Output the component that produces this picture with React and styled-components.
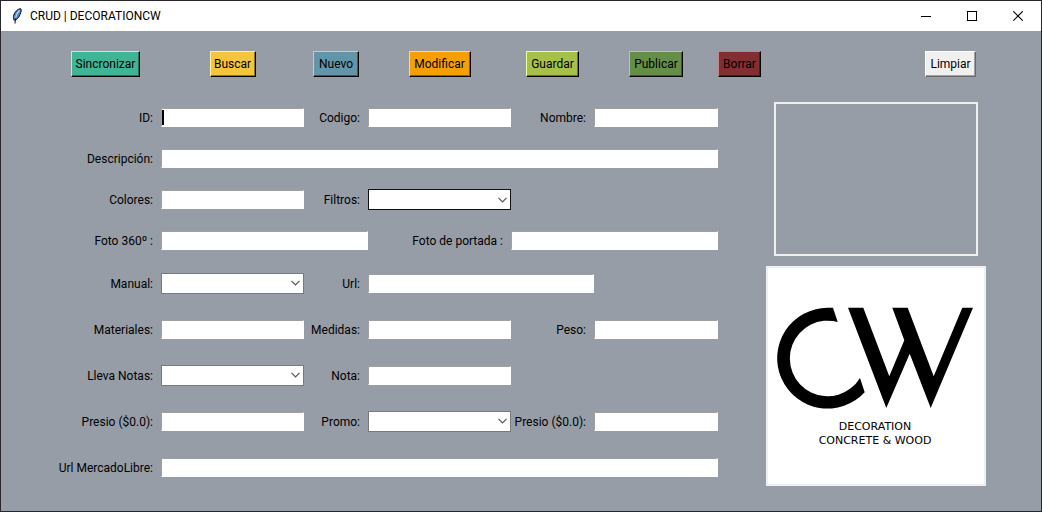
import React from 'react';
import styled, { createGlobalStyle } from 'styled-components';

const GlobalStyle = createGlobalStyle`
  * { box-sizing: border-box; }
  body {
    margin: 0;
    background: #969da7;
    font-family: Roboto, 'Open Sans', sans-serif;
    font-size: 12px;
    line-height: 16px;
    color: #000;
  }
  button, input, select { font: inherit; color: inherit; }
`;

const columns = [111, 143, 64, 143, 83, 124, 43, 230]
  .map((n) => `minmax(0, ${n}fr)`)
  .join(' ');

const Window = styled.div`
  display: flex;
  flex-direction: column;
  min-height: 100vh;
  background: #969da7;
  border: 1px solid #29262b;
`;

const TitleBar = styled.header`
  display: flex;
  align-items: center;
  height: 30px;
  padding-left: 8px;
  background: #fff;
`;

const Title = styled.h1`
  flex: 1;
  margin: 0 0 0 5px;
  font-size: 12px;
  font-weight: 400;
  white-space: nowrap;
`;

const WindowButton = styled.button`
  display: flex;
  align-items: center;
  justify-content: center;
  width: 46px;
  height: 30px;
  padding: 0;
  border: 0;
  background: transparent;
`;

const Content = styled.main`
  display: grid;
  grid-template-columns: ${columns};
  grid-template-rows: 66px auto;
  padding: 0 50px 0 49px;
`;

const Toolbar = styled.div`
  grid-column: 1 / -1;
  display: grid;
  grid-template-columns: subgrid;
  align-items: center;
  justify-items: center;
`;

const ToolButton = styled.button`
  width: ${(p) => p.$width}px;
  height: 26px;
  padding: 0;
  white-space: nowrap;
  background: ${(p) => p.$face};
  border: 1px solid;
  border-color: ${(p) => `${p.$light} ${p.$edge || '#000'} ${p.$edge || '#000'} ${p.$light}`};
  box-shadow: inset -1px -1px 0 ${(p) => p.$shade};
  ${(p) => p.$end && 'justify-self: end; margin-right: 15px;'}
`;

const Form = styled.form`
  grid-column: 1 / 7;
  display: grid;
  grid-template-columns: subgrid;
  grid-template-rows: repeat(3, 41px) 40px repeat(5, 46px);
  align-items: center;
`;

const Label = styled.label`
  grid-column: ${(p) => p.$col};
  grid-row: ${(p) => p.$row};
  padding: 1px 8px 0 0;
  text-align: right;
  white-space: nowrap;
  justify-self: end;
`;

const Cell = styled.div`
  grid-column: ${(p) => p.$col} / span ${(p) => p.$span};
  grid-row: ${(p) => p.$row};
  position: relative;
  display: flex;
  align-items: center;
`;

const Entry = styled.input`
  width: 100%;
  height: 19px;
  padding: 0 2px;
  background: #fff;
  border: 1px solid;
  border-color: #a0a0a0 #fff #fff #a0a0a0;
  border-radius: 0;
  outline: 0;
`;

const Combo = styled.select`
  width: 100%;
  height: 21px;
  padding: 0 20px 0 3px;
  appearance: none;
  background: #fff;
  border: 1px solid ${(p) => (p.$active ? '#101010' : '#7a7a7a')};
  border-radius: 0;
  outline: 0;
`;

const Chevron = styled.svg`
  position: absolute;
  right: 4px;
  pointer-events: none;
`;

const Caret = styled.span`
  position: absolute;
  left: 1px;
  width: 2px;
  height: 15px;
  background: #000;
`;

const Side = styled.aside`
  grid-column: 8;
  display: flex;
  flex-direction: column;
  align-items: center;
  gap: 10px;
  padding-top: 5px;
`;

const Preview = styled.div`
  width: 204px;
  height: 154px;
  border: 2px solid #f0f0f0;
`;

const Brand = styled.figure`
  width: 220px;
  height: 220px;
  margin: 0;
  background: #fff;
  border: 2px solid #f0f0f0;
`;

const BrandMark = styled.svg`
  display: block;
  width: 100%;
`;

const BrandCaption = styled.figcaption`
  margin-top: 10px;
  padding-right: 2px;
  font-family: 'DejaVu Sans', sans-serif;
  font-size: 11px;
  line-height: 14px;
  text-align: center;
`;

const actions = [
  { text: 'Sincronizar', width: 69, face: '#40b596', light: '#a5f5dc', shade: '#20705c' },
  { text: 'Buscar', width: 46, face: '#f3c53c', light: '#fff0a8', shade: '#8f7424' },
  { text: 'Nuevo', width: 46, face: '#6295a8', light: '#a9d4e4', shade: '#3a5864' },
  { text: 'Modificar', width: 62, face: '#f4a004', light: '#ffd890', shade: '#8f5e04' },
  { text: 'Guardar', width: 53, face: '#a6c04a', light: '#ecffa0', shade: '#62722c' },
  { text: 'Publicar', width: 54, face: '#658f49', light: '#aecb98', shade: '#3c552c' },
  { text: 'Borrar', width: 43, face: '#812f33', light: '#c38488', shade: '#4c1c1e' },
  { text: 'Limpiar', width: 51, face: '#f0f0f0', light: '#fff', shade: '#a0a0a0', edge: '#696969', end: true },
];

const fields = [
  { id: 'id', text: 'ID:', row: 1, col: 1, caret: true },
  { id: 'codigo', text: 'Codigo:', row: 1, col: 3 },
  { id: 'nombre', text: 'Nombre:', row: 1, col: 5 },
  { id: 'descripcion', text: 'Descripción:', row: 2, col: 1, span: 5 },
  { id: 'colores', text: 'Colores:', row: 3, col: 1 },
  { id: 'filtros', text: 'Filtros:', row: 3, col: 3, combo: true, active: true },
  { id: 'foto360', text: 'Foto 360º :', row: 4, col: 1, span: 2 },
  { id: 'portada', text: 'Foto de portada :', row: 4, col: 4, span: 2 },
  { id: 'manual', text: 'Manual:', row: 5, col: 1, combo: true },
  { id: 'url', text: 'Url:', row: 5, col: 3, span: 2 },
  { id: 'materiales', text: 'Materiales:', row: 6, col: 1 },
  { id: 'medidas', text: 'Medidas:', row: 6, col: 3 },
  { id: 'peso', text: 'Peso:', row: 6, col: 5 },
  { id: 'lleva-notas', text: 'Lleva Notas:', row: 7, col: 1, combo: true },
  { id: 'nota', text: 'Nota:', row: 7, col: 3 },
  { id: 'precio', text: 'Presio ($0.0):', row: 8, col: 1 },
  { id: 'promo', text: 'Promo:', row: 8, col: 3, combo: true },
  { id: 'precio-promo', text: 'Presio ($0.0):', row: 8, col: 5 },
  { id: 'mercadolibre', text: 'Url MercadoLibre:', row: 9, col: 1, span: 5 },
];

function Feather() {
  return (
    <svg width="16" height="16" viewBox="0 0 16 16" aria-hidden="true">
      <path d="M11.6 .6C8.6 1 5.6 4 4.7 7.2 4.3 8.8 4.3 10.6 5 12L6.3 12.2C9.4 10.6 11 7.4 11.9 4.2 12.3 2.6 12.4 1 11.6 .6Z" fill="#4f86c6" stroke="#10131c" strokeWidth="1" />
      <path d="M10.6 2.2C8.6 4 7.2 6.6 6.6 9.6" fill="none" stroke="#b9d8f6" strokeWidth="1.2" />
      <path d="M6.6 10.5C6.3 12 6 14 6 15.6" fill="none" stroke="#10131c" strokeWidth="1" />
    </svg>
  );
}

function Field({ id, text, row, col, span = 1, combo, active, caret }) {
  return (
    <>
      <Label htmlFor={id} $row={row} $col={col}>{text}</Label>
      <Cell $row={row} $col={col + 1} $span={span}>
        {combo ? (
          <>
            <Combo id={id} $active={active} defaultValue="">
              <option value="" />
            </Combo>
            <Chevron width="9" height="6" viewBox="0 0 9 6" aria-hidden="true">
              <path d="M.5 .8L4.5 4.8L8.5 .8" fill="none" stroke="#555" strokeWidth="1.2" />
            </Chevron>
          </>
        ) : (
          <Entry id={id} type="text" />
        )}
        {caret && <Caret />}
      </Cell>
    </>
  );
}

export default function App() {
  return (
    <>
      <GlobalStyle />
      <Window>
        <TitleBar>
          <Feather />
          <Title>CRUD | DECORATIONCW</Title>
          <WindowButton type="button" aria-label="Minimizar">
            <svg width="11" height="11" viewBox="0 0 11 11" shapeRendering="crispEdges">
              <path d="M0 5.5H10" stroke="#000" />
            </svg>
          </WindowButton>
          <WindowButton type="button" aria-label="Maximizar">
            <svg width="11" height="11" viewBox="0 0 11 11" shapeRendering="crispEdges">
              <rect x=".5" y=".5" width="9" height="9" fill="none" stroke="#000" />
            </svg>
          </WindowButton>
          <WindowButton type="button" aria-label="Cerrar">
            <svg width="11" height="11" viewBox="0 0 11 11">
              <path d="M.3 .3L9.7 9.7M9.7 .3L.3 9.7" stroke="#000" strokeWidth="1.1" />
            </svg>
          </WindowButton>
        </TitleBar>
        <Content>
          <Toolbar role="toolbar">
            {actions.map((a) => (
              <ToolButton
                key={a.text}
                type="button"
                $width={a.width}
                $face={a.face}
                $light={a.light}
                $shade={a.shade}
                $edge={a.edge}
                $end={a.end}
              >
                {a.text}
              </ToolButton>
            ))}
          </Toolbar>
          <Form>
            {fields.map((f) => (
              <Field key={f.id} {...f} />
            ))}
          </Form>
          <Side>
            <Preview />
            <Brand>
              <BrandMark viewBox="2 2 216 142" role="img" aria-label="CW">
                <path d="M67 41.8H61.3A50.4 50.4 0 1 0 98.7 126.3L94 112A37.8 37.8 0 1 1 71.7 56Z" />
                <path d="M82 41.8H97.3L123.3 110.3L138.3 74.3L126.3 41.8H141.7L167.7 110.3L196.3 41.8H207L164.7 142L143.7 87.7L120.3 142Z" />
              </BrandMark>
              <BrandCaption>
                DECORATION
                <br />
                CONCRETE &amp; WOOD
              </BrandCaption>
            </Brand>
          </Side>
        </Content>
      </Window>
    </>
  );
}
